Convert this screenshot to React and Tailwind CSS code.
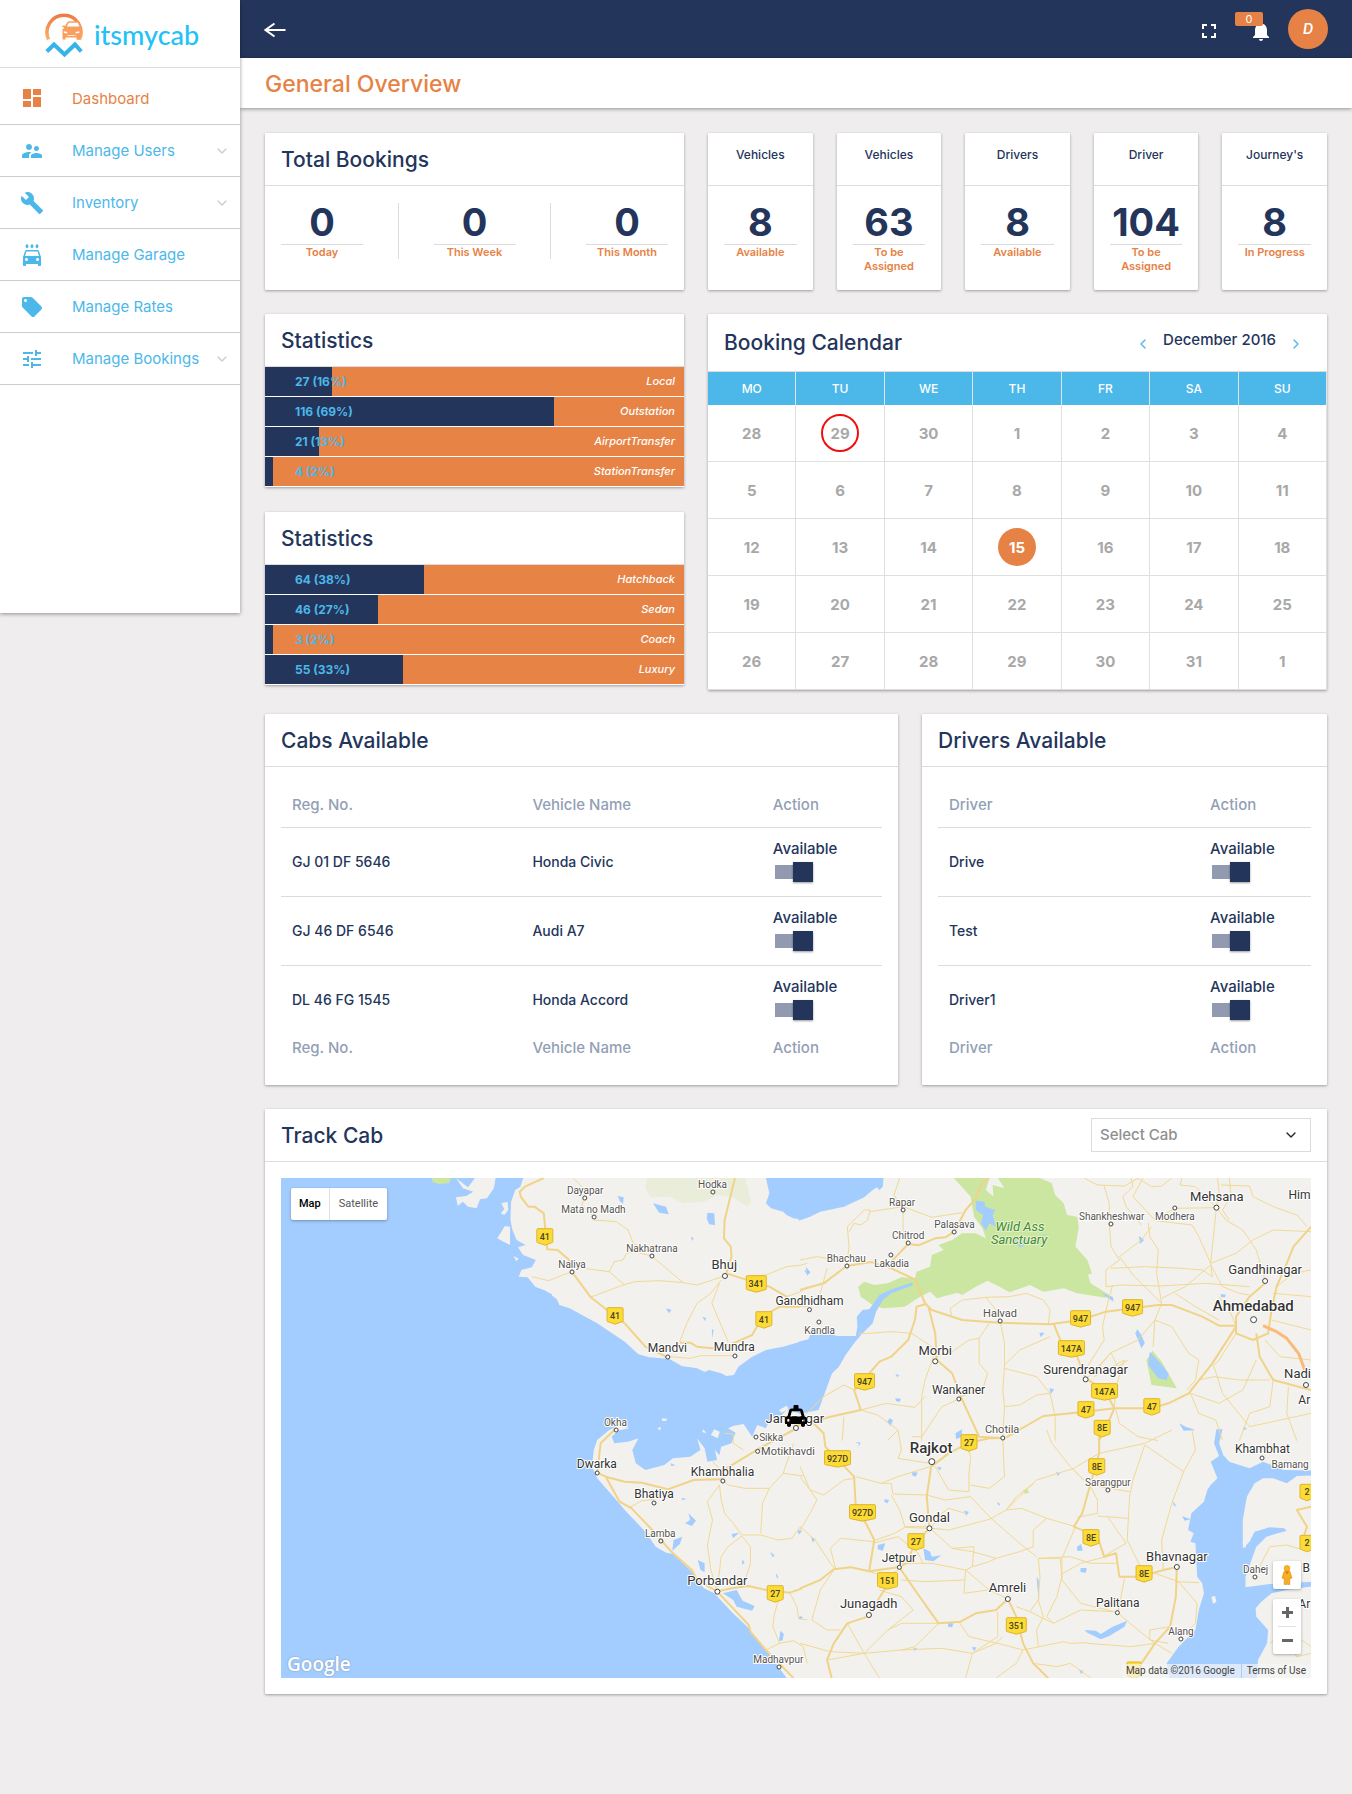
import { MdDashboard, MdSupervisorAccount, MdBuild, MdLocalCarWash, MdLocalOffer, MdTune, MdFullscreen, MdNotifications } from "react-icons/md";
import { ChevronDown, ChevronLeft, ChevronRight } from "lucide-react";

const NAV = [
  { label: "Dashboard", Icon: MdDashboard, active: true },
  { label: "Manage Users", Icon: MdSupervisorAccount, more: true },
  { label: "Inventory", Icon: MdBuild, more: true },
  { label: "Manage Garage", Icon: MdLocalCarWash },
  { label: "Manage Rates", Icon: MdLocalOffer },
  { label: "Manage Bookings", Icon: MdTune, more: true },
];

const TOTALS = [
  { value: "0", label: "Today" },
  { value: "0", label: "This Week" },
  { value: "0", label: "This Month" },
];

const COUNTERS = [
  { title: "Vehicles", value: "8", label: "Available" },
  { title: "Vehicles", value: "63", label: "To be Assigned" },
  { title: "Drivers", value: "8", label: "Available" },
  { title: "Driver", value: "104", label: "To be Assigned" },
  { title: "Journey's", value: "8", label: "In Progress" },
];

const TRIP_STATS = [
  { count: 27, percent: 16, name: "Local" },
  { count: 116, percent: 69, name: "Outstation" },
  { count: 21, percent: 13, name: "AirportTransfer" },
  { count: 4, percent: 2, name: "StationTransfer" },
];

const CAR_STATS = [
  { count: 64, percent: 38, name: "Hatchback" },
  { count: 46, percent: 27, name: "Sedan" },
  { count: 3, percent: 2, name: "Coach" },
  { count: 55, percent: 33, name: "Luxury" },
];

const WEEKDAYS = ["MO", "TU", "WE", "TH", "FR", "SA", "SU"];
const WEEKS = [
  [28, 29, 30, 1, 2, 3, 4],
  [5, 6, 7, 8, 9, 10, 11],
  [12, 13, 14, 15, 16, 17, 18],
  [19, 20, 21, 22, 23, 24, 25],
  [26, 27, 28, 29, 30, 31, 1],
];

const CABS = [
  ["GJ 01 DF 5646", "Honda Civic"],
  ["GJ 46 DF 6546", "Audi A7"],
  ["DL 46 FG 1545", "Honda Accord"],
];
const DRIVERS = [["Drive"], ["Test"], ["Driver1"]];

function Logo() {
  return (
    <a href="#home" className="flex h-[68px] items-center gap-[10px] border-b border-[#dcdcdc] pt-[2px] pl-[44px]">
      <svg width="40" height="48" viewBox="0 0 40 48" aria-hidden="true">
        <defs>
          <linearGradient id="logoArc" x1="0" y1="0" x2="0" y2="1">
            <stop offset="0" stopColor="#ee7b45" />
            <stop offset="1" stopColor="#fbb068" />
          </linearGradient>
        </defs>
        <path d="M4.600 28.500 A17 17 0 1 1 35.400 28.500" fill="none" stroke="url(#logoArc)" strokeWidth="3.500" />
        <path d="M19 14.500 l2.200 .3 L23.500 11 q.5-.8 1.500-.8 h9.500 l2.500 5 v10 l-1 2 v1.500 h-3.500 V26.500 H21.500 V28.500 H18.500 V18.500 L20.300 16.500 L17.500 15.500 z" fill="#f99f5d" />
        <path d="M24.800 11.800 h9 l1.600 3.700 H22.700 z" fill="#fff" />
        <path d="M19.800 20.200 l3.400.9 v1.500 l-3.200-.6z M31.500 21.100 l3.800-.8 v1.600 l-3.500.7z M23.500 24.200 h8 v.9 h-8z" fill="#fff" />
        <path d="M2.800 40.500 L10 33.500 L20.500 43.500 L31 33.500 L37.200 40.500" fill="none" stroke="#35b3ea" strokeWidth="4" />
      </svg>
      <span className="font-['Lato',sans-serif] text-[27px] leading-8 font-medium text-[#22c1f7]">itsmycab</span>
    </a>
  );
}

function Sidebar() {
  return (
    <aside className="z-10 min-h-[613px] w-[240px] shrink-0 self-start bg-white shadow-[0_1px_4px_rgba(0,0,0,0.4)]">
      <Logo />
      <nav className="flex flex-col">
        {NAV.map(({ label, Icon, active, more }) => (
          <a
            key={label}
            href={"#" + label.toLowerCase().replace(" ", "-")}
            className={
              "flex items-center border-b border-[#ccc] pr-[10px] pl-5 text-[15px] " +
              (active ? "h-[57px] pt-1 text-[#e68245]" : "h-[52px] text-[#4cb8ea]")
            }
          >
            <Icon size={24} className="mr-[28px] shrink-0" />
            <span className="grow pt-[2px] whitespace-nowrap">{label}</span>
            {more && <ChevronDown size={16} strokeWidth={2} className="text-[#ccc]" />}
          </a>
        ))}
      </nav>
    </aside>
  );
}

function TopBar() {
  return (
    <header className="flex h-[58px] items-center bg-[#24355b] pr-6 pl-6 text-white">
      <button type="button" aria-label="Collapse menu" className="flex pt-[2px]">
        <svg width="22" height="16" viewBox="0 0 22 16" fill="none" stroke="currentColor" strokeWidth="2" aria-hidden="true">
          <path d="M21.500 8 H1.500 M10.500 1.500 L1.500 8 L10.500 14.500" />
        </svg>
      </button>
      <button type="button" aria-label="Full screen" className="ml-auto flex pt-1">
        <MdFullscreen size={24} />
      </button>
      <button type="button" aria-label="Notifications" className="relative ml-7 flex pt-1">
        <MdNotifications size={24} />
        <span className="absolute -top-[3px] right-[10px] h-[14px] w-[28px] rounded-[2px] bg-[#e68245] text-center text-[11px] leading-[14px]">0</span>
      </button>
      <button type="button" className="ml-[15px] h-10 w-10 rounded-full bg-[#e68245] text-sm font-semibold italic">D</button>
    </header>
  );
}

function Card({ className = "", children }) {
  return <section className={"rounded-[1px] bg-white shadow-[0_1px_3px_rgba(0,0,0,0.35)] " + className}>{children}</section>;
}

function CardTitle({ children }) {
  return (
    <div className="flex h-[53px] items-center border-b border-[#dcdcdc] px-4 pt-[2px]">
      <h2 className="text-[21px] font-medium">{children}</h2>
    </div>
  );
}

function Figure({ value, label, className = "" }) {
  return (
    <div className={"text-center " + className}>
      <p className="border-b border-[#dcdcdc] pb-[3px] text-[38px] leading-[38px] font-bold">{value}</p>
      <p className="text-[11px] leading-[14px] font-semibold text-[#e68245]">{label}</p>
    </div>
  );
}

function StatCard({ rows }) {
  return (
    <Card>
      <CardTitle>Statistics</CardTitle>
      <ul>
        {rows.map((row) => (
          <li key={row.name} className="grid h-[30px] border-b border-white bg-[#e68345]">
            <div className="col-start-1 row-start-1 bg-[#24355b]" style={{ width: row.percent + "%" }} />
            <div className="col-start-1 row-start-1 flex items-center justify-between pr-[9px] pl-[30px]">
              <span className="text-xs font-bold text-[#4cb8ea]">{row.count} ({row.percent}%)</span>
              <span className="text-[11px] font-medium text-white italic">{row.name}</span>
            </div>
          </li>
        ))}
      </ul>
    </Card>
  );
}

function dayMark(week, day) {
  if (week === 0 && day === 29) return "border-2 border-[#f10f0f]";
  if (day === 15) return "bg-[#e68245] text-white";
  return "";
}

function CalendarCard() {
  return (
    <Card>
      <div className="flex h-[58px] items-center border-b border-[#dcdcdc] pr-[23px] pl-4">
        <h2 className="grow text-[21px] font-medium">Booking Calendar</h2>
        <div className="flex items-center gap-3">
          <button type="button" aria-label="Previous month" className="pt-[2px] text-[#4cb8ea]"><ChevronLeft size={16} /></button>
          <span className="pb-1 text-[15px] font-medium">December 2016</span>
          <button type="button" aria-label="Next month" className="pt-[2px] text-[#4cb8ea]"><ChevronRight size={16} /></button>
        </div>
      </div>
      <table className="w-full table-fixed border-separate border-spacing-0">
        <thead>
          <tr className="h-[33px]">
            {WEEKDAYS.map((day) => (
              <th key={day} scope="col" className="border-r border-[#dde4e8] bg-[#4cb8ea] p-0 text-xs font-medium text-white">{day}</th>
            ))}
          </tr>
        </thead>
        <tbody>
          {WEEKS.map((days, week) => (
            <tr key={week} className="h-[57px]">
              {days.map((day) => (
                <td key={day} className="border-r border-b border-[#dfdfdf] p-0 text-center text-[15px] font-bold text-[#a8a8a8]">
                  <span className={"mx-auto flex h-[38px] w-[38px] items-center justify-center rounded-full pt-[2px] " + dayMark(week, day)}>{day}</span>
                </td>
              ))}
            </tr>
          ))}
        </tbody>
      </table>
    </Card>
  );
}

function AvailabilityTable({ title, columns, widths, rows }) {
  return (
    <Card className="pb-[23px]">
      <CardTitle>{title}</CardTitle>
      <div className="px-4 pt-4">
        <table className="w-full table-fixed text-left text-[15px] font-medium">
          <thead>
            <tr className="h-[44px] border-b border-[#dcdcdc] text-[#939fb5]">
              {columns.map((name, i) => (
                <th key={name} scope="col" className={"px-[11px] font-medium " + widths[i]}>{name}</th>
              ))}
            </tr>
          </thead>
          <tbody>
            {rows.map((cells) => (
              <tr key={cells[0]} className="h-[69px] border-b border-[#dcdcdc] last:border-b-0">
                {cells.map((cell) => (
                  <td key={cell} className="px-[11px] text-sm">{cell}</td>
                ))}
                <td className="px-[11px]">
                  <label className="flex flex-col gap-[3px] pb-[2px]">
                    <span className="leading-5">Available</span>
                    <input
                      type="checkbox"
                      role="switch"
                      defaultChecked
                      className="my-[3px] ml-[2px] flex h-[14px] w-[38px] appearance-none items-center bg-[#ccc] before:block before:h-5 before:w-5 before:bg-[#24355b] before:shadow-[0_1px_2px_rgba(0,0,0,0.4)] checked:justify-end checked:bg-[#919ab0]"
                    />
                  </label>
                </td>
              </tr>
            ))}
          </tbody>
          <tfoot>
            <tr className="h-7 text-[#939fb5]">
              {columns.map((name) => (
                <td key={name} className="px-[11px]">{name}</td>
              ))}
            </tr>
          </tfoot>
        </table>
      </div>
    </Card>
  );
}

/* Map tiles: each holds its own grid, placed on the 1030 x 500 map by origin and scale. */
const TILES = {
  nw: { ox: -11, oy: -18, s: 0.3444 },
  ne: { ox: 519, oy: -18, s: 0.338 },
  sw: { ox: -11, oy: 252, s: 0.3444 },
  se: { ox: 519, oy: 252, s: 0.338 },
};

const mapX = (tile, x) => TILES[tile].ox + x * TILES[tile].s;
const mapY = (tile, y) => TILES[tile].oy + y / 3;

const LAND = {
  nw: [
    "735,54 727,80 712,90 700,125 698,180 704,210 716,240 742,255 720,262 735,285 772,300 760,322 730,330 722,350 748,352 770,380 800,392 833,418 840,435 870,445 950,490 1030,545 1070,583 1100,592 1160,597 1195,618 1240,625 1262,636 1275,630 1310,640 1325,648 1347,645 1360,620 1400,590 1440,570 1490,560 1540,545 1568,540 1568,182 1520,175 1500,165 1490,155 1455,145 1440,130 1450,100 1440,54",
    "540,54 575,82 595,54 655,54 650,85 630,115 610,118 600,145 575,140 560,125 545,138 540,112 570,108 590,95 560,85",
    "672,130 690,125 692,150 680,165 670,160 680,148",
    "660,235 682,198 697,200 697,255 678,245",
    "707,288 722,296 715,304",
    "1125,805 1135,800 1133,812",
    "1138,775 1153,776 1150,783 1138,783",
    "1280,825 1290,808 1306,815 1300,835",
    "1478,750 1500,737 1506,748 1485,758",
    "1258,808 1268,820 1255,816",
  ],
  sw: [
    "985,0 950,30 940,60 935,110 950,145 1010,215 1030,240 1090,305 1120,350 1150,368 1170,372 1220,420 1260,475 1290,490 1340,545 1390,595 1440,660 1500,744 1568,744 1568,-50 1539,-50 1500,-60 1480,-40 1450,-30 1440,-5 1415,-15 1400,20 1375,-18 1345,-12 1330,-5 1352,8 1340,40 1310,50 1305,75 1292,60 1298,90 1270,95 1262,55 1240,25 1250,60 1220,80 1170,85 1145,105 1090,120 1062,100 1052,60 1070,25 1040,35 1000,40 992,20 1010,2 1045,-6 1010,-12",
  ],
  ne: ["-2,54 1520,54 1520,842 -2,842"],
  se: ["-2,-2 1520,-2 1520,750 -2,750"],
};

const PARK = {
  nw: ["470,54 525,54 520,70 490,72 472,66"],
  ne: [
    "455,54 505,110 515,170 540,205 550,235 520,220 480,220 450,240 410,255 425,270 390,285 385,320 345,335 340,355 300,352 260,370 220,375 190,365 172,380 180,410 215,435 245,445 310,440 355,410 385,395 405,415 440,405 465,398 480,405 520,380 555,362 590,380 620,397 680,375 720,395 780,385 820,400 905,413 915,405 860,370 852,345 864,340 850,300 815,260 825,200 820,170 790,165 780,130 755,105 745,70 710,54 585,54 605,85 570,75 572,110 550,90 560,54",
    "1043,572 1070,605 1115,685 1040,675 1025,600",
  ],
  se: ["661,180 673,178 677,189 664,191"],
};

const PALE = {
  nw: ["1095,54 1380,54 1398,130 1385,138 1340,110 1300,105 1260,125 1200,130 1160,110 1105,112 1090,85"],
};

const WATER = {
  nw: [
    "1112,130 1150,140 1158,163 1130,158",
    "1270,158 1290,160 1292,195 1275,193 1268,175",
    "1010,108 1027,112 1025,132 1015,122",
    "775,385 820,403 815,407 785,398",
    "1150,445 1166,450 1158,460",
    "1283,507 1288,510 1284,535",
    "1255,470 1266,474 1264,484",
    "1222,230 1230,234 1226,243",
    "1556,320 1568,335 1560,348",
  ],
  ne: [
    "-4,54 247,54 245,80 235,90 228,82 215,90 190,112 130,140 60,155 30,170 -4,182",
    "-4,545 25,538 30,525 20,512 50,510 110,528 165,528 170,500 168,470 185,450 205,448 235,405 265,390 330,368 335,375 270,400 245,420 225,455 215,490 180,525 160,550 135,585 115,620 95,640 80,680 55,750 -4,762",
    "520,122 545,125 548,140 578,150 570,165 580,200 560,190 550,212 535,190 542,165 520,150",
    "630,240 670,240 735,222 700,240 650,262",
    "1035,575 1062,605 1090,640 1085,660 1060,655 1030,615",
    "998,508 1010,525 1020,550 1010,565 992,520",
    "1003,228 1018,240 1006,252",
    "708,518 724,518 712,532",
    "892,400 925,410 928,425",
    "265,775 275,780 268,798 258,787",
    "460,820 480,808 478,830 462,838",
    "1122,790 1140,800 1170,810 1135,812",
    "1245,402 1260,404 1257,412 1246,411",
    "282,715 298,716 296,725 284,724",
    "738,685 752,688 742,702",
    "1312,800 1322,805 1312,812",
    "12,330 32,336 22,345",
    "282,642 294,646 288,652",
  ],
  sw: [
    "1215,250 1237,272 1225,288 1205,280 1220,270",
    "1172,330 1197,320 1190,342 1168,362",
    "1242,390 1262,400 1262,426 1250,420",
    "1315,490 1355,480 1372,512 1407,528 1400,542 1355,530 1345,510",
    "1340,312 1362,308 1345,324",
    "1482,602 1492,612 1488,632 1478,632",
    "1452,366 1465,376 1460,382",
    "1468,428 1476,440 1472,446",
    "1372,388 1378,398 1370,404",
    "1163,100 1178,106 1165,108",
    "1195,204 1210,206 1197,211",
    "1530,300 1545,302 1536,314",
    "1535,560 1548,563 1538,570",
  ],
  se: [
    "1232,-2 1250,-2 1240,40 1252,75 1270,95 1300,105 1330,115 1370,95 1430,120 1520,122 1520,136 1470,138 1440,160 1400,145 1370,145 1345,160 1322,200 1310,270 1310,355 1330,335 1345,305 1390,292 1432,295 1440,302 1380,320 1350,350 1318,440 1318,472 1390,462 1430,458 1520,456 1520,468 1440,480 1395,490 1365,515 1348,535 1350,560 1385,600 1382,640 1355,690 1352,750 1095,750 1085,700 1120,650 1170,600 1180,540 1195,490 1190,460 1175,440 1172,380 1170,340 1155,335 1165,310 1148,300 1158,250 1195,215 1205,180 1215,165 1235,145 1215,95 1240,78 1225,40",
    "365,355 385,365 390,380 418,376 395,394 370,390",
    "842,600 875,602 890,612 925,590 968,572 960,590 915,618 890,628 850,608",
    "230,345 252,340 245,362 230,358",
    "163,35 180,38 170,55 175,42",
    "820,350 832,342 836,362 820,362",
    "485,242 500,245 492,257",
    "830,414 848,414 846,428 830,426",
    "438,578 454,580 450,592 438,590",
    "508,652 522,652 516,664",
    "335,655 348,655 338,664",
    "332,125 348,128 342,140 332,136",
    "758,126 770,130 762,138",
    "250,208 263,210 260,219 250,217",
    "826,720 838,722 832,733",
    "33,322 46,326 38,338",
    "582,215 592,222 588,228",
    "700,440 706,450 708,512 703,480",
    "405,110 418,112 414,122",
    "1103,212 1115,232 1105,225",
    "1130,258 1155,268 1138,272",
    "0,558 8,562 0,567",
  ],
};

const ISLANDS = { se: ["1217,500 1228,498 1232,515 1222,522", "1310,340 1322,335 1318,356"] };

const HIGHWAYS = {
  nw: [
    "795,54 740,80 725,95 728,110 750,140 768,140 795,160 805,268 835,270 875,305 877,336 930,410 985,455 1030,490 1090,560 1150,590",
    "1350,54 1320,180 1318,235 1338,260 1340,290 1325,340 1380,358 1450,380 1500,410",
    "1190,548 1220,548 1240,560 1285,565 1345,550 1400,525 1430,470 1480,440 1539,440",
  ],
  ne: [
    "0,390 70,370 138,318 210,306 270,325 340,358 370,430 390,450 480,480 590,488 740,493 830,480 905,455 1060,435 1100,435 1190,470 1240,497 1290,497",
    "270,305 320,252 350,256 400,235 430,232 456,215 490,150 520,115 540,70 560,54",
    "372,432 345,440 340,480 320,540 270,590 235,605 205,640",
    "380,440 400,520 405,600 450,640 480,720 530,830 600,835",
    "750,490 770,540 820,590 845,655 900,690 930,745",
    "-20,800 90,770 180,750 160,690 195,660",
    "610,832 720,768 845,755 930,745 1040,745 1090,730 1150,700 1220,610 1290,500",
    "1376,370 1330,410 1290,470 1290,520 1340,540 1385,520 1395,450 1410,380 1440,310 1460,260 1512,200",
    "1350,520 1360,590 1400,660 1512,690",
    "930,745 915,780 885,842",
  ],
  sw: [
    "1000,0 960,40 950,128 975,140 1015,215 1050,235 1110,300 1135,330 1170,370 1225,420 1240,450 1298,484 1340,530 1390,585 1395,605 1440,660 1520,744",
    "975,140 1030,155 1080,158 1155,178 1230,150 1315,148",
    "1325,115 1430,50 1520,0",
    "1300,484 1340,475 1390,468 1440,480 1510,488 1545,475",
  ],
  se: [
    "0,475 60,450 100,418 150,412 205,424 290,412 315,400 340,340 383,295 375,200 388,110 440,70 500,38 560,25 600,24",
    "30,-30 70,10 75,50 160,140 165,230 195,280 220,330 205,420",
    "294,412 340,480 410,580 475,575 520,550 580,540 615,507 640,560 660,640 690,700 740,750",
    "255,470 200,560 140,580 100,640 80,690 95,750",
    "885,0 885,70 860,160 835,250 810,290 880,320 900,380 935,370 945,440 1010,440 1075,420 1115,411 1112,500 1095,590 1050,640 1010,700",
    "1512,230 1470,240 1500,290 1490,320 1512,350",
  ],
};

const ROADS = {
  nw: [
    "1320,348 1240,375 1200,368 1130,362 1060,365 1025,375 930,412",
    "890,322 985,335 1030,375",
    "985,335 1000,305 1025,300 1035,280 1060,275 1108,288 1200,368",
    "940,180 1005,185 1040,210 1055,250 1075,262",
    "880,54 910,85 914,113 905,135 935,165",
    "1310,360 1280,400 1240,430 1210,490 1190,545",
    "1305,370 1283,430 1330,545",
    "1380,350 1440,345 1500,320 1540,316 1560,310",
    "760,350 810,362 850,345 877,336",
    "1160,590 1220,595 1250,587 1350,587",
    "1500,410 1540,395 1560,380",
  ],
  ne: [
    "295,54 278,105 305,150 305,210 320,249",
    "138,318 145,260 140,200 190,150 208,150 200,180 180,195 160,190 145,215",
    "208,155 305,140 390,172 480,158",
    "0,300 50,290 138,305",
    "80,325 60,400 20,440 0,440",
    "840,54 880,75 960,78 1000,55 1040,80 1070,78 1100,54",
    "900,78 915,130 915,192 920,260 945,300 905,330 905,380 950,375 1065,378 1200,370 1330,380",
    "980,54 985,80 955,110 965,140 1010,195",
    "1015,54 985,110 1050,180 1110,145 1232,143 1240,95 1235,54",
    "1130,54 1125,75 1170,80 1232,143 1260,180 1310,210 1350,270 1376,360",
    "1232,143 1215,310 1220,350 1190,330 1130,325 1020,320 920,325",
    "1050,182 1160,195 1180,230 1215,310 1290,280 1340,240 1400,210 1512,215",
    "1245,75 1330,78 1340,110 1400,140 1470,165 1500,200",
    "1270,54 1275,110 1250,150 1270,180",
    "1030,190 1035,230 1060,270 1055,340 1070,430 1050,480 1045,560",
    "1070,430 990,350 945,290 1010,240 1040,200",
    "1215,315 1140,380 1070,415",
    "1215,315 1250,380 1300,400 1330,405",
    "925,375 910,430 895,500 900,540 850,620",
    "1050,480 1000,540 920,578 870,640",
    "1050,480 1100,500 1150,580 1180,600 1170,660 1145,690",
    "735,490 740,450 720,420 670,400 620,410 550,412 480,420 445,445 448,465",
    "550,412 580,450 592,483 605,550 605,620 600,690 605,740 600,830",
    "605,615 650,570 740,530",
    "605,625 700,650 740,700 755,770 755,842",
    "740,700 700,705 650,735 605,740",
    "530,535 500,540 450,575 405,590",
    "530,535 560,490",
    "530,535 530,610 555,640 540,690 475,710",
    "270,515 330,520 390,560 400,590",
    "270,515 205,520 175,520",
    "395,590 370,660 360,710 360,842",
    "160,690 130,675 70,710 10,770",
    "180,750 230,765 290,810 260,840",
    "180,750 255,730 340,742 370,710",
    "475,715 420,740 360,830 330,830",
    "845,660 900,600 920,578 940,620 970,600",
    "870,650 960,600 935,680 930,740",
    "1155,700 1240,730 1310,690 1350,600",
    "1155,700 1180,760 1230,780 1250,840",
    "1155,690 1180,660 1225,650 1300,660 1390,660",
    "1225,620 1250,700 1330,800 1512,760",
    "1400,660 1390,740 1330,760 1300,842",
    "1290,497 1270,450 1240,410",
    "1240,480 1170,440 1110,400",
    "1290,520 1240,600 1220,620",
    "1395,480 1512,510",
    "1400,400 1512,410",
    "1376,540 1420,590 1512,600",
    "1410,380 1460,340 1512,330",
    "1445,680 1440,760 1470,842",
    "935,750 945,790 1000,830 1060,842",
    "130,770 125,842",
  ],
  sw: [
    "1315,150 1300,110 1285,95",
    "1315,150 1330,165 1380,175 1450,175 1490,130 1520,40",
    "1450,175 1430,220 1425,310",
    "1305,165 1310,210 1320,250 1345,280 1370,315 1425,315 1475,330 1515,325 1540,290",
    "1305,165 1270,215 1285,270 1270,345 1280,420 1298,484",
    "1370,318 1330,350 1310,380 1300,470",
    "1370,318 1395,350 1395,400 1375,465",
    "1045,232 1080,212 1115,208",
    "1480,500 1465,550 1460,590 1480,640",
    "1440,660 1480,640 1520,632 1548,650 1560,700",
    "1510,490 1530,530 1535,565 1560,570",
    "1490,130 1550,138",
    "1320,10 1345,12 1345,40 1375,60",
  ],
  se: [
    "160,145 130,150 70,195 30,180 0,140",
    "165,140 240,160 290,140 385,110",
    "240,160 270,160 275,192 375,195",
    "270,195 295,240 310,290 380,290",
    "383,295 310,292 280,310 225,330",
    "390,295 440,300 560,268 610,240 655,235 730,265 815,290",
    "390,290 420,250 440,235 490,250",
    "375,195 430,210 505,200 560,260 650,340 700,380",
    "400,110 440,180 500,185 500,130 505,80 495,50",
    "505,165 560,175 605,140 600,30",
    "610,240 700,150 810,115 885,70 1020,40 1100,0",
    "610,240 640,200 690,160",
    "805,115 860,170 880,210 880,250 820,262",
    "730,0 745,40 800,110 855,165",
    "1020,45 1135,125 1100,220 1070,330 1075,420",
    "1020,45 985,150 975,200 968,330 1010,415",
    "860,165 975,185",
    "880,258 970,265",
    "910,260 965,340 905,375",
    "1135,125 1170,60 1160,0",
    "390,300 450,355 510,365 580,385 650,365 690,350 690,300 730,265",
    "450,355 515,350 510,410 490,420",
    "300,400 390,400 490,420 560,480 615,507",
    "365,402 350,370 325,395",
    "220,335 120,325 90,355 105,415",
    "215,340 290,320 350,370",
    "510,410 560,395 580,385",
    "490,420 485,490 555,480",
    "300,450 370,455 490,450",
    "205,425 260,440 290,420",
    "100,420 60,480 35,570 80,600 120,600",
    "0,290 45,330 90,400 105,418",
    "235,480 300,500 335,540 260,600 190,670 80,690",
    "140,580 190,670 235,744",
    "190,670 90,665 0,640",
    "410,580 300,580 260,600",
    "410,580 340,650 300,660 190,670",
    "300,660 420,655 510,670 580,640 600,620",
    "585,545 585,620 510,670 490,744",
    "470,575 500,620 585,640 660,660 780,635 800,640 850,638",
    "705,385 710,440 705,510 680,545 640,530",
    "705,385 770,385 775,440 760,500 730,560 750,580",
    "705,385 800,380 860,400 940,400",
    "815,290 775,385 775,450 830,520 930,545",
    "770,435 830,400 905,380",
    "680,545 750,580 830,540 930,545",
    "960,445 950,500 940,548 1000,600 1050,640",
    "1050,640 980,650 850,640",
    "1050,640 1100,670",
    "1115,455 1180,458",
    "1050,430 1120,455 1175,520 1170,580 1130,620",
    "1095,590 1035,600 1035,630 1090,640",
    "660,660 640,700 580,744",
    "690,700 760,710 800,700 860,744",
    "705,510 720,560 700,600 705,650",
    "0,110 30,180 50,210 30,250 0,300",
    "1345,440 1390,350 1440,345 1490,360",
    "1420,600 1470,680 1512,670",
    "1390,640 1440,600 1512,650",
    "290,0 300,60 290,85 385,100",
  ],
};

/* [tile, name, x, y, size, dot x, dot y] */
const TOWNS = [
  ["nw", "Dayapar", 915, 91, 10, 914, 114],
  ["nw", "Mata no Madh", 939, 148, 10, 941, 171],
  ["nw", "Hodka", 1285, 73, 10, 1286, 96],
  ["nw", "Nakhatrana", 1109, 265, 10, 1109, 288],
  ["nw", "Naliya", 877, 313, 10, 877, 336],
  ["nw", "Bhuj", 1319, 316, 13, 1321, 348],
  ["nw", "Mandvi", 1154, 565, 12, 1155, 591],
  ["nw", "Mundra", 1348, 562, 12, 1350, 588],
  ["nw", "Okha", 1003, 787, 10, 1005, 810],
  ["ne", "Gandhidham", 28, 422, 12, 28, 449],
  ["ne", "Kandla", 58, 511, 10, 56, 486],
  ["ne", "Rapar", 302, 127, 10, 305, 150],
  ["ne", "Palasava", 457, 193, 10, 456, 216],
  ["ne", "Chitrod", 320, 226, 10, 320, 249],
  ["ne", "Bhachau", 137, 295, 10, 139, 318],
  ["ne", "Lakadia", 271, 310, 10, 269, 285],
  ["ne", "Shankheshwar", 922, 169, 10, 920, 192],
  ["ne", "Modhera", 1109, 169, 10, 1109, 144],
  ["ne", "Mehsana", 1233, 112, 13, 1232, 143],
  ["ne", "Him", 1478, 106, 12],
  ["ne", "Gandhinagar", 1376, 331, 13, 1376, 363],
  ["ne", "Ahmedabad", 1341, 442, 15, 1342, 479],
  ["ne", "Halvad", 592, 460, 11, 592, 483],
  ["ne", "Morbi", 400, 574, 13, 400, 604],
  ["ne", "Surendranagar", 845, 629, 13, 845, 658],
  ["ne", "Wankaner", 469, 691, 12, 470, 717],
  ["ne", "Chotila", 598, 808, 11, 600, 834],
  ["ne", "Nadi", 1472, 643, 13, 1497, 675],
  ["ne", "Ar", 1492, 719, 12],
  ["ne", "Jamnagar", -15, 776, 13, -12, 804],
  ["sw", "Sikka", 1455, 21, 10, 1411, 21],
  ["sw", "Motikhavdi", 1504, 64, 11, 1416, 64],
  ["sw", "Dwarka", 949, 103, 12, 950, 129],
  ["sw", "Khambhalia", 1314, 127, 12, 1315, 153],
  ["sw", "Bhatiya", 1115, 193, 12, 1115, 219],
  ["sw", "Lamba", 1133, 310, 10, 1135, 333],
  ["sw", "Porbandar", 1299, 454, 13, 1299, 485],
  ["sw", "Madhavpur", 1476, 688, 10, 1478, 711],
  ["se", "Rajkot", 388, 58, 15, 390, 95],
  ["se", "Gondal", 383, 265, 13, 383, 295],
  ["se", "Jetpur", 293, 385, 12, 294, 412],
  ["se", "Junagadh", 203, 523, 13, 204, 555],
  ["se", "Amreli", 614, 475, 13, 615, 507],
  ["se", "Sarangpur", 911, 157, 10, 911, 180],
  ["se", "Bhavnagar", 1115, 380, 13, 1115, 411],
  ["se", "Palitana", 940, 520, 12, 939, 548],
  ["se", "Alang", 1127, 604, 10, 1127, 627],
  ["se", "Khambhat", 1368, 58, 12, 1367, 84],
  ["se", "Bamang", 1450, 103, 10],
  ["se", "Dahej", 1348, 417, 10, 1346, 441],
  ["se", "B", 1498, 415, 12],
  ["se", "Ar", 1492, 523, 12],
];

const SHIELDS = [
  ["nw", "41", 798, 230], ["nw", "41", 1002, 467], ["nw", "341", 1412, 371], ["nw", "41", 1434, 479],
  ["ne", "947", 830, 476], ["ne", "947", 984, 443], ["ne", "947", 191, 665], ["ne", "147A", 803, 566],
  ["ne", "147A", 901, 695], ["ne", "47", 846, 749], ["ne", "47", 1041, 740], ["ne", "8E", 894, 805],
  ["se", "27", 500, 38], ["se", "927D", 111, 86], ["se", "927D", 185, 248], ["se", "27", 343, 335],
  ["se", "8E", 878, 110], ["se", "8E", 861, 323], ["se", "8E", 1018, 431], ["se", "151", 259, 452],
  ["se", "351", 640, 587], ["sw", "27", 1467, 491], ["se", "2", 1500, 187], ["se", "2", 1500, 340], ["se", "", 988, 720],
];

const SHIELD_HALF = [7, 7, 8, 10, 13];

function Shapes({ set, ...rest }) {
  return Object.entries(set).map(([tile, list]) => (
    <g
      key={tile}
      transform={"translate(" + TILES[tile].ox + " " + TILES[tile].oy + ") scale(" + TILES[tile].s + " " + 1 / 3 + ")"}
      {...rest}
    >
      {list.map((points) =>
        rest.stroke ? (
          <polyline key={points} points={points} vectorEffect="non-scaling-stroke" strokeLinejoin="round" />
        ) : (
          <polygon key={points} points={points} />
        )
      )}
    </g>
  ));
}

function MapDrawing() {
  return (
    <svg className="h-full w-full" viewBox="0 0 1030 500" preserveAspectRatio="xMidYMid slice" role="img" aria-label="Map of Gujarat">
      <rect width="1030" height="500" fill="#a3ccff" />
      <Shapes set={LAND} fill="#f2f1ee" />
      <Shapes set={PALE} fill="#e9edd9" />
      <Shapes set={PARK} fill="#cae6a1" />
      <Shapes set={WATER} fill="#a3ccff" />
      <Shapes set={ISLANDS} fill="#f2f1ee" />
      <Shapes set={ROADS} fill="none" stroke="#f1d993" strokeWidth="1" />
      <Shapes set={HIGHWAYS} fill="none" stroke="#f1d388" strokeWidth="2" />
      <Shapes set={{ ne: ["1370,497 1410,515 1440,535 1475,580 1497,640"] }} fill="none" stroke="#fbb97a" strokeWidth="3" />
      <g className="font-['Roboto',sans-serif]" textAnchor="middle">
        {SHIELDS.map(([tile, text, x, y]) => {
          const h = SHIELD_HALF[text.length];
          return (
            <g key={tile + x + y} transform={"translate(" + mapX(tile, x) + " " + mapY(tile, y) + ")"}>
              <path
                d={"M" + (1 - h) + " -8 H" + (h - 1) + " Q" + h + " -8 " + h + " -7 V5 Q" + h + " 6 " + (h - 1) + " 6 L0 8.500 L" + (1 - h) + " 6 Q" + -h + " 6 " + -h + " 5 V-7 Q" + -h + " -8 " + (1 - h) + " -8 Z"}
                fill="#fddb35"
                stroke="#deb52d"
              />
              <text y="3" fontSize="9" fontWeight="500" fill="#4a4325">{text}</text>
            </g>
          );
        })}
        <g stroke="#fff" strokeWidth="2" strokeLinejoin="round" paintOrder="stroke">
          <g fontSize="13" fontStyle="italic" fill="#43892f" stroke="#e6f4d0">
            <text x="739" y="53">Wild Ass</text>
            <text x="738" y="66">Sanctuary</text>
          </g>
          {TOWNS.map(([tile, name, x, y, size]) => (
            <text
              key={name + x}
              x={mapX(tile, x)}
              y={mapY(tile, y) + 4}
              fontSize={size}
              fontWeight={size > 14 ? 500 : 400}
              fill={size > 11 ? "#333" : "#55524f"}
            >
              {name}
            </text>
          ))}
        </g>
        {TOWNS.filter((town) => town.length > 5).map(([tile, name, , , size, dx, dy]) => (
          <circle key={name} cx={mapX(tile, dx)} cy={mapY(tile, dy)} r={size > 14 ? 3 : size > 12 ? 2.500 : 2} fill="#fff" stroke="#444" />
        ))}
      </g>
    </svg>
  );
}

function CabMarker({ className }) {
  return (
    <svg className={className} width="22" height="22" viewBox="0 0 22 22" role="img" aria-label="Cab position">
      <path
        fillRule="evenodd"
        d="M8.500 1 Q8.500 0 9.500 0 H12.500 Q13.500 0 13.500 1 V3.500 H15.500 Q17.300 3.500 17.800 5.200 L19.600 11.500 Q22 11.700 22 14 V18.500 Q22 19 21.500 19 H20 V20.300 Q20 22 18 22 Q16 22 16 20.300 V19 H6 V20.300 Q6 22 4 22 Q2 22 2 20.300 V19 H.5 Q0 19 0 18.500 V14 Q0 11.700 2.400 11.500 L4.200 5.200 Q4.700 3.500 6.500 3.500 H8.500 Z M6.800 6.200 L5.300 11.500 H16.700 L15.200 6.200 Z M3.600 13.700 A1.500 1.500 0 1 0 3.600 16.700 A1.500 1.500 0 1 0 3.600 13.700 Z M18.400 13.700 A1.500 1.500 0 1 0 18.400 16.700 A1.500 1.500 0 1 0 18.400 13.700 Z"
        fill="#000"
      />
    </svg>
  );
}

function TrackMap() {
  return (
    <div className="relative h-[500px] overflow-hidden font-['Roboto',sans-serif]">
      <MapDrawing />
      <CabMarker className="absolute top-1/2 left-1/2 -mt-[23px] -ml-[11px]" />
      <div className="absolute top-[10px] left-[10px] flex h-8 rounded-[2px] bg-white text-[11px] shadow-[0_1px_3px_rgba(0,0,0,0.3)]">
        <button type="button" className="border-r border-[#e0e0e0] px-2 font-medium text-black">Map</button>
        <button type="button" className="px-[9px] text-[#565656]">Satellite</button>
      </div>
      <span className="absolute bottom-[2px] left-[6px] font-['Open_Sans',sans-serif] text-[19px] leading-6 font-semibold text-white [text-shadow:0_0_2px_#7d93b5]">Google</span>
      <div className="absolute right-[10px] bottom-6 flex flex-col gap-[10px]">
        <button type="button" aria-label="Street View" className="flex h-7 w-7 items-center justify-center rounded-[2px] bg-white shadow-[0_1px_3px_rgba(0,0,0,0.3)]">
          <svg width="12" height="20" viewBox="0 0 12 20" aria-hidden="true">
            <path d="M3 6.500 H9 L11 13 L9.500 13.500 L8.800 12 V19.500 H6.500 V14.500 H5.500 V19.500 H3.200 V12 L2.500 13.500 L1 13 Z" fill="#f9b01c" stroke="#d98f14" strokeWidth=".6" />
            <path d="M4 6.500 H8 L6 9.500 Z" fill="#e8711c" />
            <circle cx="6" cy="3.400" r="2.900" fill="#fbb41e" stroke="#d98f14" strokeWidth=".6" />
          </svg>
        </button>
        <div className="flex w-7 flex-col rounded-[2px] bg-white px-[5px] text-[#666] shadow-[0_1px_3px_rgba(0,0,0,0.3)]">
          <button type="button" aria-label="Zoom in" className="flex h-7 items-center justify-center border-b border-[#e0e0e0]">
            <svg width="11" height="11" viewBox="0 0 11 11" aria-hidden="true"><path d="M5.500 0 V11 M0 5.500 H11" stroke="currentColor" strokeWidth="3" /></svg>
          </button>
          <button type="button" aria-label="Zoom out" className="flex h-[27px] items-center justify-center">
            <svg width="11" height="11" viewBox="0 0 11 11" aria-hidden="true"><path d="M0 5.500 H11" stroke="currentColor" strokeWidth="3" /></svg>
          </button>
        </div>
      </div>
      <div className="absolute right-0 bottom-0 flex h-[14px] bg-[#f5f5f5]/70 text-[10px] leading-[14px] text-[#444]">
        <span className="border-r border-[#a3ccff] pr-[6px] pl-1">Map data ©2016 Google</span>
        <a href="#terms" className="px-[5px]">Terms of Use</a>
      </div>
    </div>
  );
}

export default function App() {
  return (
    <div className="flex min-h-screen bg-[#efedee] font-['Inter','Liberation_Sans',sans-serif] text-[#24355b]">
      <Sidebar />
      <div className="flex min-w-0 grow flex-col">
        <TopBar />
        <div className="flex h-[50px] items-center bg-white pl-[25px] shadow-[0_1px_4px_rgba(0,0,0,0.4)]">
          <h1 className="pt-[2px] text-[23px] font-medium text-[#e68245]">General Overview</h1>
        </div>
        <main className="flex flex-col gap-6 px-[25px] pt-[25px] pb-[100px]">
          <div className="grid grid-cols-[419fr_619fr] gap-6">
            <Card>
              <CardTitle>Total Bookings</CardTitle>
              <div className="flex h-[104px] justify-between px-4 pt-[17px]">
                <Figure {...TOTALS[0]} className="w-[82px]" />
                <div className="h-14 w-px bg-[#dcdcdc]" />
                <Figure {...TOTALS[1]} className="w-[82px]" />
                <div className="h-14 w-px bg-[#dcdcdc]" />
                <Figure {...TOTALS[2]} className="w-[82px]" />
              </div>
            </Card>
            <div className="grid grid-cols-5 gap-6">
              {COUNTERS.map((item, i) => (
                <Card key={i}>
                  <h2 className="h-[53px] border-b border-[#dcdcdc] pt-[14px] text-center text-xs leading-4 font-medium">{item.title}</h2>
                  <Figure value={item.value} label={item.label} className="px-4 pt-[17px]" />
                </Card>
              ))}
            </div>
          </div>
          <div className="grid grid-cols-[419fr_619fr] items-start gap-6">
            <div className="flex flex-col gap-[25px]">
              <StatCard rows={TRIP_STATS} />
              <StatCard rows={CAR_STATS} />
            </div>
            <CalendarCard />
          </div>
          <div className="grid grid-cols-[633fr_405fr] gap-6">
            <AvailabilityTable title="Cabs Available" columns={["Reg. No.", "Vehicle Name", "Action"]} widths={["w-[40%]", "w-[40%]", "w-[20%]"]} rows={CABS} />
            <AvailabilityTable title="Drivers Available" columns={["Driver", "Action"]} widths={["w-[70%]", "w-[30%]"]} rows={DRIVERS} />
          </div>
          <Card className="pb-4">
            <div className="flex h-[53px] items-center justify-between border-b border-[#dcdcdc] px-4">
              <h2 className="pt-[2px] text-[21px] font-medium">Track Cab</h2>
              <div className="grid w-[220px] items-center">
                <select aria-label="Select Cab" className="col-start-1 row-start-1 h-[34px] appearance-none border border-[#dcdcdc] bg-white px-2 text-[15px] font-medium text-[#8f8f8f]">
                  <option>Select Cab</option>
                </select>
                <ChevronDown size={16} className="pointer-events-none col-start-1 row-start-1 mr-3 justify-self-end text-[#222]" />
              </div>
            </div>
            <div className="px-4 pt-4">
              <TrackMap />
            </div>
          </Card>
        </main>
      </div>
    </div>
  );
}
